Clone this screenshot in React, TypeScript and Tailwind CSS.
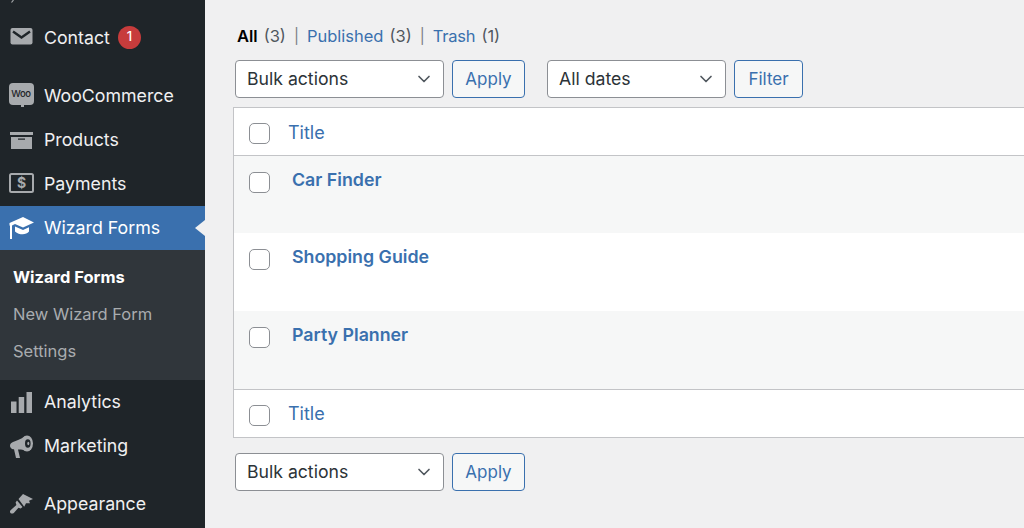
import type { ReactNode } from 'react';
import { ChevronDown } from 'lucide-react';

const iconColor = '#a7aaad';
const sidebarBg = '#1f2529';

function MailIcon() {
  return (
    <svg width="23" height="17" viewBox="0 0 23 17" className="-mt-[4px]">
      <rect x="0.5" y="0" width="22" height="16.500" rx="2" fill={iconColor} />
      <path d="M3 3.500 11.500 9.500 20 3.500" fill="none" stroke={sidebarBg} strokeWidth="2.400" />
    </svg>
  );
}

function WooIcon() {
  return (
    <div className="relative -mt-[5px] w-[25px] h-[22px] rounded-[4px] bg-[#a7aaad] flex items-center justify-center">
      <span className="text-[9.500px] leading-none font-medium text-[#1f2529] tracking-[-0.3px]">Woo</span>
      <div className="absolute -bottom-[2px] left-[12px] w-[3px] h-[3px] bg-[#a7aaad]" />
    </div>
  );
}

function ArchiveIcon() {
  return (
    <svg width="23" height="17" viewBox="0 0 23 17" fill={iconColor}>
      <rect x="0" y="0" width="23" height="3" />
      <path d="M1 5h21v12H1zM8 6.500v1.200h7V6.500z" fillRule="evenodd" />
    </svg>
  );
}

function MoneyIcon() {
  return (
    <svg width="25" height="20" viewBox="0 0 25 20" className="-mt-[2px]">
      <rect x="1" y="1" width="23" height="18" rx="1.500" fill="none" stroke={iconColor} strokeWidth="2" />
      <text x="12.500" y="15" textAnchor="middle" fontSize="14" fontWeight="700" fill={iconColor}>$</text>
    </svg>
  );
}

function LearnIcon() {
  return (
    <svg width="25" height="22" viewBox="0 0 25 22" fill="#fff" className="-mt-[1px]">
      <path d="M14 0 25 5.500 14 10.500 6 7 2 9 0.500 8.500V6z" />
      <path d="M1 8h2v14H1z" />
      <path d="M6 9.500 14 13l6-2.800v4.300c-1.500 1.800-3.800 2.800-6.300 2.800S8 16.500 6 14.500z" />
    </svg>
  );
}

function BarsIcon() {
  return (
    <svg width="21" height="21" viewBox="0 0 21 21" fill={iconColor}>
      <rect x="0" y="9.500" width="5.500" height="11.500" />
      <rect x="7.700" y="5" width="5.500" height="16" />
      <rect x="15.500" y="0" width="5.500" height="21" />
    </svg>
  );
}

function MegaphoneIcon() {
  return (
    <svg width="23" height="23" viewBox="0 0 23 23" fill={iconColor}>
      <path d="M15 1.500C11 4 6 6 3 7 .5 8-.5 10 .3 12c.6 1.600 2 2.300 3.700 2.300L6 23h4l-2-8.500c2.500-.2 5 .2 8 1.500z" />
      <ellipse cx="17" cy="8.500" rx="6" ry="8" />
      <ellipse cx="17.800" cy="8.500" rx="2.800" ry="4.200" fill={sidebarBg} />
      <ellipse cx="18.300" cy="8.500" rx="1" ry="1.800" />
    </svg>
  );
}

function BrushIcon() {
  return (
    <svg width="23" height="20" viewBox="0 0 23 20" fill={iconColor}>
      <path d="M8.500 5 13 0l10 5-4 1.800 1 2.400-4 .1-1.800 3.400z" />
      <path d="M7 6.500 12.500 13l-1.800 1.500-2.200-.8-4.700 5.200C2.500 20 .4 19.800 0 18c-.1-.7.100-1.300.6-1.800l5.800-5.200-.8-2.600z" />
    </svg>
  );
}

function MenuItem({ icon, label, active, low, children }: { icon: ReactNode; label: string; active?: boolean; low?: boolean; children?: ReactNode }) {
  return (
    <div className={`relative flex items-center h-[44px] ${active ? 'bg-[#3a70ae] text-white' : 'text-[#f0f0f1]'}`}>
      <div className="w-[44px] pl-[8px] pr-[10px] flex items-center justify-center shrink-0">{icon}</div>
      <span className={`text-[17.750px] leading-[24px] ${low ? 'pt-[2px]' : ''}`}>{label}</span>
      {children}
      {active && (
        <div className="absolute right-0 top-[14px] w-0 h-0 border-y-[8px] border-y-transparent border-r-[10px] border-r-[#f0f0f1]" />
      )}
    </div>
  );
}

function Checkbox({ className = '' }: { className?: string }) {
  return <div className={`w-[21px] h-[21px] rounded-[5px] border border-[#8c8f94] bg-white shrink-0 ${className}`} />;
}

function Dropdown({ label, width }: { label: string; width: string }) {
  return (
    <div className={`flex items-center justify-between h-[38px] pl-[11px] pr-[9px] rounded-[4px] border border-[#8c8f94] bg-white text-[#2c3338] ${width}`}>
      <span className="text-[17.650px]">{label}</span>
      <ChevronDown size={20} strokeWidth={2} className="text-[#50575e]" />
    </div>
  );
}

function Button({ label, width }: { label: string; width: string }) {
  return (
    <div className={`flex items-center justify-center h-[38px] pt-[2px] rounded-[4px] border border-[#3a70ae] bg-[#f6f7f7] text-[#3a70ae] text-[17px] ${width}`}>
      {label}
    </div>
  );
}

function Row({ title, striped, height }: { title: string; striped?: boolean; height: string }) {
  return (
    <div className={`flex items-start pt-[16px] pl-[15px] ${height} ${striped ? 'bg-[#f6f7f7]' : 'bg-white'}`}>
      <Checkbox />
      <span className="ml-[22px] -mt-[4px] text-[17.800px] leading-[24px] font-semibold text-[#3a70ae]">{title}</span>
    </div>
  );
}

function TitleRow({ className, labelClass = '' }: { className: string; labelClass?: string }) {
  return (
    <div className={`flex items-center h-[48px] pl-[15px] bg-white border-[#c3c4c7] ${className}`}>
      <Checkbox className="mt-[3px]" />
      <span className={`ml-[18px] text-[18px] text-[#3a70ae] ${labelClass}`}>Title</span>
    </div>
  );
}

export default function App() {
  return (
    <div className="flex w-[1024px] h-[528px] overflow-hidden bg-[#f0f0f1] font-['Inter',sans-serif]">
      {/* Sidebar */}
      <aside className="w-[205px] shrink-0 bg-[#1f2529]">
        <div className="h-[16px] pl-[11px]">
          <svg width="3" height="3" viewBox="0 0 3 3">
            <path d="M2.500 0 .5 2.500" stroke={iconColor} strokeWidth="1.200" fill="none" />
          </svg>
        </div>
        <MenuItem icon={<MailIcon />} label="Contact">
          <span className="ml-[8px] -mt-[2px] flex items-center justify-center w-[23px] h-[23px] rounded-full bg-[#c73c3c] text-white text-[13px] font-medium">1</span>
        </MenuItem>
        <div className="h-[14px]" />
        <MenuItem icon={<WooIcon />} label="WooCommerce" />
        <MenuItem icon={<ArchiveIcon />} label="Products" />
        <MenuItem icon={<MoneyIcon />} label="Payments" />
        <MenuItem icon={<LearnIcon />} label="Wizard Forms" active />
        <div className="h-[130px] pt-[9px] pl-[13px] bg-[#30363b] text-[16.500px]">
          <div className="h-[37px] flex items-center font-bold text-white">Wizard Forms</div>
          <div className="h-[37px] flex items-center text-[#a9acaf]">New Wizard Form</div>
          <div className="h-[37px] flex items-center text-[#a9acaf]">Settings</div>
        </div>
        <MenuItem icon={<BarsIcon />} label="Analytics" />
        <MenuItem icon={<MegaphoneIcon />} label="Marketing" />
        <div className="h-[14px]" />
        <MenuItem icon={<BrushIcon />} label="Appearance" />
      </aside>

      {/* Content */}
      <main className="flex-1 pl-[28px] pt-[24px]">
        <div className="flex items-center h-[24px] pl-[4px] text-[16.500px] text-[#50575e]">
          <span className="font-semibold text-black">All</span>
          <span className="ml-[6px]">(3)</span>
          <span className="mx-[8px] text-[15px] text-[#787c82]">|</span>
          <span className="text-[#3a70ae]">Published</span>
          <span className="ml-[6px]">(3)</span>
          <span className="mx-[8px] text-[15px] text-[#787c82]">|</span>
          <span className="text-[#3a70ae] tracking-[-0.2px]">Trash</span>
          <span className="ml-[6px]">(1)</span>
        </div>

        <div className="flex items-center mt-[12px] pl-[2px]">
          <Dropdown label="Bulk actions" width="w-[209px]" />
          <div className="ml-[8px]"><Button label="Apply" width="w-[73px]" /></div>
          <div className="ml-[22px]"><Dropdown label="All dates" width="w-[179px]" /></div>
          <div className="ml-[8px]"><Button label="Filter" width="w-[69px]" /></div>
        </div>

        <div className="mt-[9px] border-y border-l border-[#c3c4c7]">
          <TitleRow className="border-b" labelClass="pt-[2px]" />
          <Row title="Car Finder" striped height="h-[77px]" />
          <Row title="Shopping Guide" height="h-[78px]" />
          <Row title="Party Planner" striped height="h-[78px]" />
          <TitleRow className="border-t" />
        </div>

        <div className="flex items-center mt-[15px] pl-[2px]">
          <Dropdown label="Bulk actions" width="w-[209px]" />
          <div className="ml-[8px]"><Button label="Apply" width="w-[73px]" /></div>
        </div>
      </main>
    </div>
  );
}
